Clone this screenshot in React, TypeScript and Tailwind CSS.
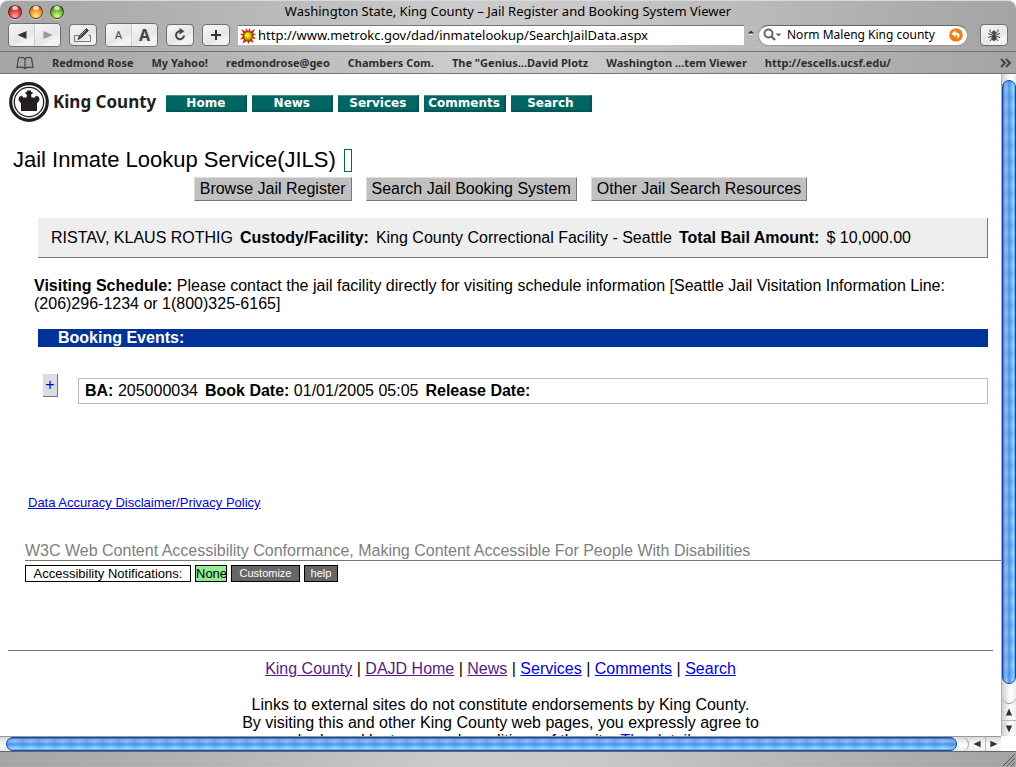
import type { ReactNode } from "react";
import clsx from "clsx";

const METAL =
  "bg-[repeating-linear-gradient(0deg,rgba(255,255,255,0.05)_0px,rgba(255,255,255,0.05)_1px,rgba(0,0,0,0.01)_1px,rgba(0,0,0,0.01)_2px),linear-gradient(90deg,#a4a4a4,#b2b2b2_20%,#cbcbcb_45%,#c8c8c8_58%,#b2b2b2_82%,#a2a2a2)]";

const BOOKMARKS = [
  "Redmond Rose",
  "My Yahoo!",
  "redmondrose@geo",
  "Chambers Com.",
  'The "Genius...David Plotz',
  "Washington ...tem Viewer",
  "http://escells.ucsf.edu/",
];

const NAV = ["Home", "News", "Services", "Comments", "Search"];

const JAIL_LINKS = [
  "Browse Jail Register",
  "Search Jail Booking System",
  "Other Jail Search Resources",
];

const FOOTER_LINKS = [
  { label: "King County", visited: true },
  { label: "DAJD Home", visited: true },
  { label: "News", visited: true },
  { label: "Services", visited: false },
  { label: "Comments", visited: false },
  { label: "Search", visited: false },
];

function WindowDot({ label, className }: { label: string; className: string }) {
  return (
    <button
      type="button"
      aria-label={label}
      className={clsx(
        "relative h-[14px] w-[14px] rounded-full border border-black/50 shadow-[0_1px_0_rgba(255,255,255,0.6)]",
        className,
      )}
    >
      <span className="absolute left-[3px] top-0 h-1 w-1.5 rounded-full bg-white/70" />
    </button>
  );
}

function ToolButton({
  label,
  className,
  children,
}: {
  label: string;
  className?: string;
  children: ReactNode;
}) {
  return (
    <button
      type="button"
      aria-label={label}
      className={clsx(
        "flex h-[22px] w-7 shrink-0 items-center justify-center bg-[linear-gradient(150deg,#f6f6f6,#e6e6e6_60%,#f4f4f4_75%,#eeeeee)]",
        className ?? "rounded border border-[#707070]",
      )}
    >
      {children}
    </button>
  );
}

function Arrow({ d, className }: { d: string; className: string }) {
  return (
    <svg viewBox="0 0 10 10" className={className} fill="currentColor" aria-hidden="true">
      <path d={d} />
    </svg>
  );
}

const LEFT = "M9.500 1v8L.5 5z";
const RIGHT = "M.5 1v8l9-4z";
const UP = "M1 9.500h8L5 .5z";
const DOWN = "M1 .5h8L5 9.500z";

function Chrome() {
  return (
    <header className={clsx("shrink-0 rounded-t-lg border-t border-[#d8d8d8]", METAL)}>
      <div className="grid h-[22px] grid-cols-[1fr_auto_1fr] items-center px-2">
        <div className="flex gap-[7px]">
          <WindowDot
            label="Close"
            className="bg-[radial-gradient(circle_at_50%_85%,#ffb0a8,#e0463f_45%,#8e1a1c)]"
          />
          <WindowDot
            label="Minimize"
            className="bg-[radial-gradient(circle_at_50%_85%,#fff08a,#f59a2c_50%,#a04c08)]"
          />
          <WindowDot
            label="Zoom"
            className="bg-[radial-gradient(circle_at_50%_85%,#e4ff8c,#6fb83a_50%,#236312)]"
          />
        </div>
        <div className="whitespace-nowrap pb-0.5 text-[13px] leading-4">
          Washington State, King County – Jail Register and Booking System Viewer
        </div>
      </div>

      <div className="flex h-7 items-center gap-2 px-2 pb-1">
        <div className="flex overflow-hidden rounded border border-[#707070]">
          <ToolButton label="Back" className="h-5 w-[26px] border-r border-[#cccccc]">
            <Arrow d={LEFT} className="h-2.5 w-2.5 text-[#333333]" />
          </ToolButton>
          <ToolButton label="Forward" className="h-5 w-[25px]">
            <Arrow d={RIGHT} className="h-2.5 w-2.5 text-[#999999]" />
          </ToolButton>
        </div>
        <ToolButton label="AutoFill">
          <svg viewBox="0 0 20 16" className="h-4 w-5" fill="none" stroke="#444" aria-hidden="true">
            <path d="M6.500 8.500h-5v6h16v-6h-2" stroke="#777" />
            <path d="M5 12.500l1.500-4L13.500 1.500l2 2L8.500 10.500z" fill="#444" />
            <path d="M7 9l6-6" stroke="#ccc" strokeWidth=".7" />
          </svg>
        </ToolButton>
        <div className="flex overflow-hidden rounded border border-[#707070] font-bold text-[#444444]">
          <ToolButton label="Smaller text" className="h-5 w-[26px] border-r border-[#cccccc]">
            <span className="text-[11px] font-normal">A</span>
          </ToolButton>
          <ToolButton label="Larger text" className="h-5 w-[25px]">
            <span className="text-[16px] leading-5">A</span>
          </ToolButton>
        </div>
        <ToolButton label="Reload">
          <svg viewBox="0 0 14 14" className="h-3.5 w-3.5" aria-hidden="true">
            <path d="M8 3.300a4 4 0 1 0 3 4.200" fill="none" stroke="#444" strokeWidth="2" />
            <path d="M6.500 0v6.500L11.500 3.200z" fill="#444" />
          </svg>
        </ToolButton>
        <ToolButton label="Add bookmark">
          <svg viewBox="0 0 12 12" className="h-3 w-3" stroke="#333" strokeWidth="2" aria-hidden="true">
            <path d="M6 1v10M1 6h10" />
          </svg>
        </ToolButton>

        <div className="flex h-5 min-w-0 flex-1 items-center border-t border-[#777777] bg-white pl-0.5">
          <svg viewBox="0 0 16 16" className="h-4 w-4 shrink-0" aria-hidden="true">
            <path
              d="M8 3L10 0l.5 3.500L15 1l-2 4.500 3 .5-3 2 3 3-4-.5 1.500 4.500L10 13l-1.500 3L7 13l-4.500 2.500L4 11l-4 .5L3 8 0 6l3.500-.5L1 1l4.500 2.500L6 0z"
              fill="#d8200c"
            />
            <circle cx="8" cy="8" r="4.600" fill="#806600" />
            <circle cx="8" cy="8" r="3.800" fill="#c9b414" />
            <circle cx="7.300" cy="7.200" r="2.200" fill="#fff200" />
          </svg>
          <input
            aria-label="Address"
            defaultValue="http://www.metrokc.gov/dad/inmatelookup/SearchJailData.aspx"
            className="h-[18px] min-w-0 flex-1 bg-transparent pl-0.5 text-[13px] outline-none"
          />
        </div>
        <svg viewBox="0 0 6 6" className="-mx-1 mb-1 h-1.5 w-1.5 shrink-0" aria-hidden="true">
          <path d="M0 3.500L3 .5l3 3z" fill="#333" />
          <path d="M1 4.500h4" stroke="#eee" />
        </svg>
        <div className="mr-1 flex h-[21px] w-[210px] shrink-0 items-center rounded-full border border-t-[#666666] border-[#999999] bg-white pl-1 pr-0.5">
          <svg viewBox="0 0 20 14" className="h-3.5 w-5 shrink-0" aria-hidden="true">
            <circle cx="5.500" cy="5.500" r="4" fill="none" stroke="#666" strokeWidth="2" />
            <path d="M8.500 8.500L12 12" stroke="#666" strokeWidth="2.400" />
            <path d="M12.500 5.500h6l-3 3z" fill="#666" />
          </svg>
          <input
            aria-label="Search"
            defaultValue="Norm Maleng King county"
            className="h-[18px] min-w-0 flex-1 bg-transparent pl-1 text-[12px] outline-none"
          />
          <button type="button" aria-label="SnapBack" className="mr-0.5 shrink-0">
            <svg viewBox="0 0 14 14" className="h-3.5 w-3.5" aria-hidden="true">
              <circle cx="7" cy="7" r="6.800" fill="#f57c0f" />
              <path d="M6.500 2.300L2.300 5.800l4.200 3.400V7c2 0 2.600 1.500 1.700 4 4.200-3.200 2.500-6.600-1.700-6.600z" fill="#fff" />
            </svg>
          </button>
        </div>
        <ToolButton label="Report bug">
          <svg viewBox="0 0 16 16" className="h-4 w-4" stroke="#444" fill="#444" aria-hidden="true">
            <ellipse cx="8" cy="10.500" rx="2" ry="3" />
            <circle cx="8" cy="5.500" r="1.500" />
            <path
              d="M7 7L4 4.500V2.500M9 7l3-2.500V2.500M6.500 8L2 6.500M9.500 8L14 6.500M6.500 9L2 10.500M9.500 9l4.500 1.500M6.500 10.500L4 14M9.500 10.500L12 14"
              fill="none"
            />
          </svg>
        </ToolButton>
      </div>

      <nav
        aria-label="Bookmarks"
        className="flex h-[23px] items-center gap-[18px] border-y border-[#777777] pl-4 pr-1 text-[#2e2e2e]"
      >
        <svg viewBox="0 0 18 12" className="h-3 w-[18px] shrink-0" fill="none" stroke="#444" aria-hidden="true">
          <path d="M9 2Q7-.5 2.500 1L1 10.500Q6 9.500 9 11.500q3-2 8-1L15.500 1Q11-.5 9 2v9" strokeWidth="1.200" />
        </svg>
        {BOOKMARKS.map((name) => (
          <a key={name} href="#" className="whitespace-nowrap text-[11px] font-bold leading-4">
            {name}
          </a>
        ))}
        <button type="button" aria-label="More bookmarks" className="ml-auto">
          <svg viewBox="0 0 12 10" className="h-2.5 w-3" fill="none" stroke="#444" strokeWidth="2" aria-hidden="true">
            <path d="M1 1l4 4-4 4M6 1l4 4-4 4" />
          </svg>
        </button>
      </nav>
    </header>
  );
}

function Logo() {
  return (
    <a href="#" className="flex items-center gap-1 text-[#231f20]">
      <svg viewBox="0 0 40 40" className="h-10 w-10" aria-hidden="true">
        <circle cx="20" cy="20" r="18.300" fill="#fff" stroke="#231f20" strokeWidth="3.200" />
        <circle cx="20" cy="20" r="14.700" fill="none" stroke="#231f20" strokeWidth="1.300" />
        <path
          d="M12 29v-7.500L9.500 18l.5-3 3-1.500 1 2h3.500l.5-3-1.500-.5v-2H18V8.500h4V10h1.500v2l-1.500.5.5 3H26l1-2 3 1.500.5 3-2.500 3.500V29z"
          fill="#231f20"
        />
      </svg>
      <span className="text-[17px] font-bold leading-6">King County</span>
    </a>
  );
}

function Page() {
  return (
    <main className="min-w-0 flex-1 overflow-hidden bg-white font-['Liberation_Sans',Arial,sans-serif] text-[16px] leading-[18px] text-black">
      <div className="flex items-center gap-2.5 pl-[9px] pt-2 font-['Noto_Sans',sans-serif]">
        <Logo />
        <nav aria-label="King County" className="mt-[3px] flex gap-[5px]">
          {NAV.map((item) => (
            <a
              key={item}
              href="#"
              className="flex h-[17px] min-w-[81px] items-center justify-center border-b-2 border-r-2 border-t border-b-[#005653] border-r-[#005653] border-t-[#3f8f8c] bg-[#006663] px-1 font-['DejaVu_Sans'] text-[12px] font-bold text-white"
            >
              {item}
            </a>
          ))}
        </nav>
      </div>

      <div className="mt-6 flex items-center gap-2 pl-[13px]">
        <h1 className="text-[22px] leading-7">Jail Inmate Lookup Service(JILS)</h1>
        <span className="h-[23px] w-2 border border-[#006663]" />
      </div>

      <div className="mt-[3px] flex justify-center gap-[14px]">
        {JAIL_LINKS.map((label) => (
          <button
            key={label}
            type="button"
            className="h-6 border border-b-[#777777] border-l-[#dddddd] border-r-[#777777] border-t-[#dddddd] bg-[#c0c0c0] px-[5px] leading-[18px]"
          >
            {label}
          </button>
        ))}
      </div>

      <section className="ml-[38px] mr-[13px] mt-[17px] flex h-10 items-center gap-[7px] whitespace-nowrap border-b border-r border-[#777777] bg-[#eeeeee] pl-[13px]">
        <span>RISTAV, KLAUS ROTHIG</span>
        <b>Custody/Facility:</b>
        <span>King County Correctional Facility - Seattle</span>
        <b>Total Bail Amount:</b>
        <span>$ 10,000.00</span>
      </section>

      <p className="ml-[34px] mr-[13px] mt-[19px]">
        <b>Visiting Schedule:</b> Please contact the jail facility directly for visiting schedule
        information [Seattle Jail Visitation Information Line: (206)296-1234 or 1(800)325-6165]
      </p>

      <h2 className="ml-[38px] mr-[13px] mt-4 bg-[#003399] pl-5 font-bold text-white">
        Booking Events:
      </h2>

      <div className="ml-[43px] mr-[13px] mt-[27px] flex gap-5">
        <button
          type="button"
          aria-label="Show booking details"
          className="h-[23px] w-[15px] border-b border-r border-[#777777] bg-[#dddddd] text-[#0000ee]"
        >
          +
        </button>
        <div className="mt-1 flex h-[26px] flex-1 items-center gap-[7px] border border-[#bbbbbb] pl-1.5">
          <span>
            <b>BA:</b> 205000034
          </span>
          <span>
            <b>Book Date:</b> 01/01/2005 05:05
          </span>
          <b>Release Date:</b>
        </div>
      </div>

      <div className="mt-[90px] pl-7 text-[13px]">
        <a href="#" className="text-[#0000ee] underline">
          Data Accuracy Disclaimer/Privacy Policy
        </a>
      </div>

      <section className="ml-[25px] mt-[30px]">
        <p className="border-b border-[#777777] text-[#808080]">
          W3C Web Content Accessibility Conformance, Making Content Accessible For People With
          Disabilities
        </p>
        <div className="mt-1 flex h-[17px] gap-1 text-[13px] leading-[15px]">
          <span className="w-[166px] border border-black text-center">
            Accessibility Notifications:
          </span>
          <span className="w-8 border border-black bg-[#90ee90] text-center">None</span>
          <button type="button" className="w-[69px] border border-black bg-[#666666] text-[11px] text-white">
            Customize
          </button>
          <button type="button" className="w-[34px] border border-black bg-[#666666] text-[11px] text-white">
            help
          </button>
        </div>
      </section>

      <footer className="ml-2 mr-2 mt-[68px] border-t border-[#777777] pt-[9px] text-center">
        <p>
          {FOOTER_LINKS.map(({ label, visited }, i) => (
            <span key={label}>
              {i > 0 && " | "}
              <a
                href="#"
                className={clsx("underline", visited ? "text-[#551a8b]" : "text-[#0000ee]")}
              >
                {label}
              </a>
            </span>
          ))}
        </p>
        <p className="mt-[18px]">
          Links to external sites do not constitute endorsements by King County.
          <br />
          By visiting this and other King County web pages, you expressly agree to
          <br />
          be bound by terms and conditions of the site.{" "}
          <a href="#" className="text-[#0000ee] underline">
            The details.
          </a>
        </p>
      </footer>
    </main>
  );
}

function VerticalBar() {
  return (
    <div className="flex w-[15px] shrink-0 flex-col border-l border-[#b0b0b0] bg-[linear-gradient(90deg,#d0d0d0,#ffffff_60%,#eeeeee)] pt-1.5 text-[#333333]">
      <div className="min-h-0 flex-1 rounded-full border border-[#1546b0] bg-[repeating-linear-gradient(180deg,rgba(20,90,210,0.2)_0px,transparent_8px,rgba(20,90,210,0.2)_16px),linear-gradient(90deg,#2a66d0,#94bdf0_15%,#84b4ee_42%,#4f96ea_48%,#69b5fa_65%,#9ce4ff_90%,#4c9be8)]" />
      <div className="-mt-2 h-7 rounded-b-full border-b border-[#999999] pt-2" />
      <button type="button" aria-label="Scroll up" className="flex h-4 items-center justify-center">
        <Arrow d={UP} className="h-2 w-2" />
      </button>
      <button
        type="button"
        aria-label="Scroll down"
        className="flex h-4 items-center justify-center border-t border-[#bbbbbb]"
      >
        <Arrow d={DOWN} className="h-2 w-2" />
      </button>
    </div>
  );
}

function HorizontalBar() {
  return (
    <div className="flex h-[15px] shrink-0 bg-white pr-[15px] text-[#333333]">
      <div className="flex flex-1 border-t border-[#999999] bg-[linear-gradient(180deg,#d8d8d8,#ffffff_60%,#e8e8e8)] pl-1.5">
        <div className="flex-1 rounded-full border border-[#1546b0] bg-[repeating-linear-gradient(90deg,rgba(20,90,210,0.2)_0px,transparent_8px,rgba(20,90,210,0.2)_16px),linear-gradient(180deg,#2a66d0,#94bdf0_15%,#84b4ee_42%,#4f96ea_48%,#69b5fa_65%,#9ce4ff_90%,#4c9be8)]" />
        <div className="-ml-2 w-5 rounded-r-full border-r border-[#999999]" />
        <button type="button" aria-label="Scroll left" className="flex w-4 items-center justify-center">
          <Arrow d={LEFT} className="h-2 w-2" />
        </button>
        <button
          type="button"
          aria-label="Scroll right"
          className="flex w-4 items-center justify-center border-l border-[#bbbbbb]"
        >
          <Arrow d={RIGHT} className="h-2 w-2" />
        </button>
      </div>
    </div>
  );
}

export default function App() {
  return (
    <div className="flex h-screen flex-col overflow-hidden bg-white font-['Noto_Sans',sans-serif] text-black">
      <Chrome />
      <div className="flex min-h-0 flex-1">
        <Page />
        <VerticalBar />
      </div>
      <HorizontalBar />
      <div
        className={clsx(
          "flex h-4 shrink-0 items-end justify-end border-t border-[#666666] pb-px pr-px",
          METAL,
        )}
      >
        <svg viewBox="0 0 12 12" className="h-3 w-3" stroke="#555" aria-hidden="true">
          <path d="M0 12L12 0M4 12l8-8M8 12l4-4" />
        </svg>
      </div>
    </div>
  );
}
